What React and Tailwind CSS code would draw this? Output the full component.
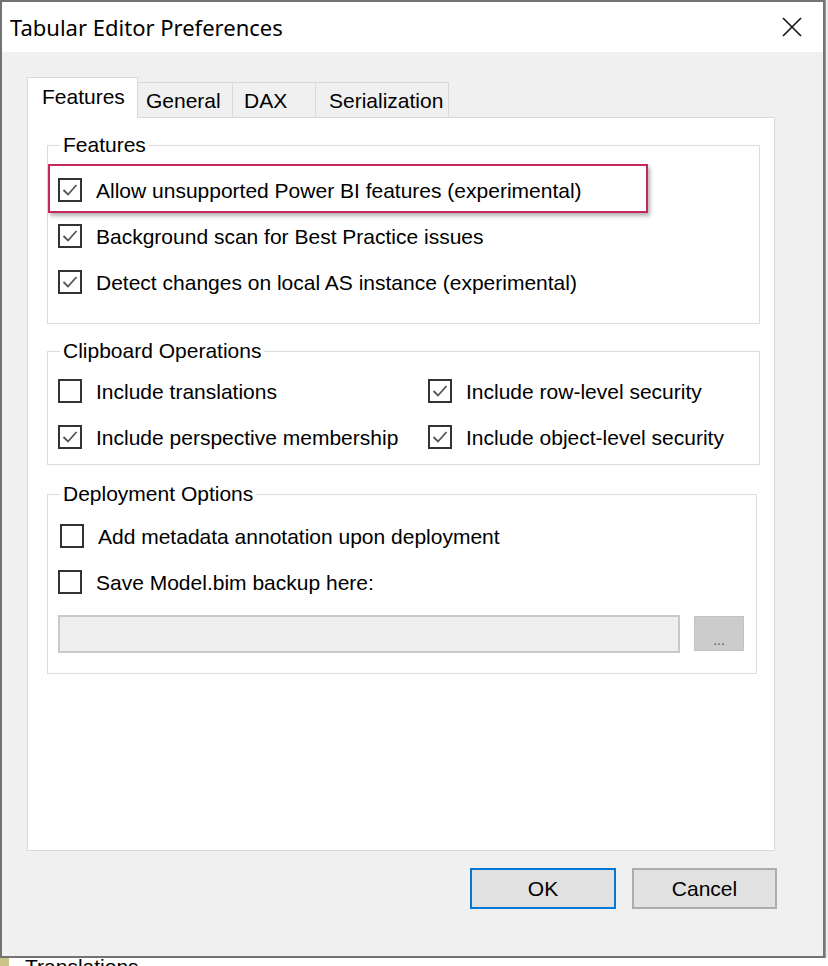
import React from 'react';

const body = { fontFamily: '"Liberation Sans", Arial, sans-serif' };
const title = { fontFamily: '"Noto Sans", "Open Sans", sans-serif' };

function Check({ checked }) {
  return (
    <span className="w-[24px] h-[24px] border-2 border-[#333333] bg-white flex items-center justify-center shrink-0">
      {checked && (
        <svg width="18" height="18" viewBox="0 0 18 18">
          <polyline points="2.5,9 7,13.5 15.5,4" fill="none" stroke="#555555" strokeWidth="1.8" />
        </svg>
      )}
    </span>
  );
}

function Row({ checked, label, className = '' }) {
  return (
    <div className={`flex items-center h-[46px] ${className}`}>
      <Check checked={checked} />
      <span className="ml-[14px] text-[21px] leading-none text-black whitespace-nowrap">{label}</span>
    </div>
  );
}

function Group({ legend, className = '', children }) {
  return (
    <fieldset className={`border border-[#dcdcdc] px-[10px] ${className}`}>
      <legend className="ml-[2px] px-[3px] text-[21px] leading-[24px] text-black">{legend}</legend>
      {children}
    </fieldset>
  );
}

export default function App() {
  return (
    <div className="w-[828px] h-[966px] overflow-hidden bg-white flex flex-col" style={body}>
      <div className="flex h-[958px]">
        <div className="w-[825px] h-[958px] border-2 border-[#737373] flex flex-col bg-[#f0f0f0]">
          {/* title bar */}
          <div className="h-[50px] bg-white flex items-center justify-between pl-[8px] pr-[21px]">
            <span className="text-[22px] text-black" style={title}>Tabular Editor Preferences</span>
            <svg width="20" height="20" viewBox="0 0 20 20">
              <path d="M1 1 L19 19 M19 1 L1 19" stroke="#111" strokeWidth="1.6" />
            </svg>
          </div>

          {/* body */}
          <div className="flex-1 flex flex-col pt-[25px] pl-[25px]">
            <div className="flex items-end h-[40px] text-[21px] text-black">
              <div className="relative z-10 -mb-px h-[41px] w-[111px] bg-white border-x border-t border-[#d9d9d9] pl-[14px] pt-[3px]">Features</div>
              <div className="h-[35px] w-[95px] border-t border-r border-[#d9d9d9] pl-[8px] pt-[2px]">General</div>
              <div className="h-[35px] w-[83px] border-t border-r border-[#d9d9d9] pl-[11px] pt-[2px]">DAX</div>
              <div className="h-[35px] w-[133px] border-t border-r border-[#d9d9d9] pl-[13px] pt-[2px]">Serialization</div>
            </div>

            <div className="w-[748px] h-[734px] bg-white border border-[#d9d9d9] pl-[19px] pt-[15px] flex flex-col">
              <Group legend="Features" className="w-[713px] pt-[10px] pb-[18px]">
                <div className="relative">
                  <div className="absolute left-[-10px] top-[-3px] w-[600px] h-[49px] border-2 border-[#c4285a] shadow-[2px_3px_4px_rgba(0,0,0,0.3)]" />
                  <Row checked label="Allow unsupported Power BI features (experimental)" />
                </div>
                <Row checked label="Background scan for Best Practice issues" />
                <Row checked label="Detect changes on local AS instance (experimental)" />
              </Group>

              <Group legend="Clipboard Operations" className="w-[713px] mt-[15px] pt-[5px] pb-[4px]">
                <div className="grid grid-cols-[370px_1fr]">
                  <Row label="Include translations" />
                  <Row checked label="Include row-level security" />
                  <Row checked label="Include perspective membership" />
                  <Row checked label="Include object-level security" />
                </div>
              </Group>

              <Group legend="Deployment Options" className="w-[710px] mt-[17px] pt-[7px] pb-[20px]">
                <Row label="Add metadata annotation upon deployment" className="ml-[2px]" />
                <Row label="Save Model.bim backup here:" />
                <div className="flex items-start mt-[10px]">
                  <div className="w-[622px] h-[38px] border-2 border-[#c9c9c9] bg-[#efefef]" />
                  <div className="ml-[14px] mt-px w-[50px] h-[35px] bg-[#cccccc] border border-[#c2c2c2] flex items-end justify-center pb-[3px] text-[14px] leading-none text-[#555555]">...</div>
                </div>
              </Group>
            </div>

            <div className="flex justify-end gap-[16px] pr-[46px] mt-[17px] text-[21px] text-black">
              <button className="w-[146px] h-[41px] border-2 border-[#0078d7] bg-[#e1e1e1]">OK</button>
              <button className="w-[145px] h-[41px] border-2 border-[#adadad] bg-[#e1e1e1]">Cancel</button>
            </div>
          </div>
        </div>
        <div className="flex-1 bg-[#ececec] border-l border-[#9a9a9a]" />
      </div>
      <div className="h-[8px] flex overflow-hidden">
        <div className="w-[9px] bg-[#c9c48a]" />
        <span className="ml-[16px] text-[21px] leading-[20px] text-black -mt-[1px]">Translations</span>
      </div>
    </div>
  );
}
